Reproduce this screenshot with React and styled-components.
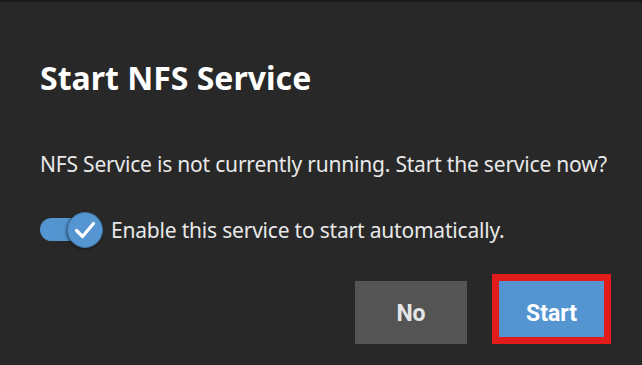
import React from "react";
import styled, { createGlobalStyle } from "styled-components";

const GlobalStyle = createGlobalStyle`
  html, body {
    margin: 0;
    padding: 0;
    background: #282828;
  }
  body {
    font-family: "Noto Sans", "Open Sans", sans-serif;
  }
`;

const Dialog = styled.div`
  box-sizing: border-box;
  width: 642px;
  height: 365px;
  background: #282828;
  border-top: 2px solid #1c1c1c;
  padding: 0 31px 0 40px;
  display: flex;
  flex-direction: column;
`;

const Title = styled.h1`
  margin: 56px 0 0 0;
  font-size: 32px;
  line-height: 40px;
  font-weight: 700;
  color: #ffffff;
  letter-spacing: 0;
`;

const Message = styled.p`
  margin: 52px 0 0 0;
  font-size: 21px;
  line-height: 28px;
  color: #e8e8e8;
  letter-spacing: -0.2px;
  white-space: nowrap;
`;

const ToggleRow = styled.label`
  display: flex;
  align-items: center;
  gap: 8px;
  margin-top: 34px;
  height: 36px;
  color: #e8e8e8;
  font-size: 21px;
  letter-spacing: -0.2px;
  white-space: nowrap;
`;

const Switch = styled.span`
  position: relative;
  width: 63px;
  height: 36px;
  flex: none;
`;

const Track = styled.span`
  position: absolute;
  left: 0;
  top: 6px;
  width: 44px;
  height: 23px;
  border-radius: 12px;
  background: #5495d1;
`;

const Knob = styled.span`
  position: absolute;
  right: 0;
  top: 0;
  box-sizing: border-box;
  width: 36px;
  height: 36px;
  border-radius: 50%;
  background: #5596d2;
  border: 1px solid #3d6f9c;
  box-shadow: -1px 1px 3px rgba(0, 0, 0, 0.45);
  display: flex;
  align-items: center;
  justify-content: center;
`;

const Actions = styled.div`
  display: flex;
  justify-content: flex-end;
  align-items: flex-end;
  gap: 25px;
  margin-top: 26px;
`;

const Button = styled.button`
  box-sizing: border-box;
  border: none;
  margin: 0;
  font-family: Roboto, "Noto Sans", sans-serif;
  font-weight: 700;
  font-size: 23px;
  color: ${({ primary }) => (primary ? "#ffffff" : "#e6e6e6")};
  background: ${({ primary }) => (primary ? "#5495d1" : "#545454")};
  width: ${({ primary }) => (primary ? "105px" : "112px")};
  height: ${({ primary }) => (primary ? "56px" : "63px")};
  padding: 0;
  padding-top: ${({ primary }) => (primary ? "8px" : "1px")};
`;

const Highlight = styled.div`
  border: 7px solid #e21b1b;
  display: flex;
`;

const Check = () => (
  <svg width="26" height="26" viewBox="0 0 26 26">
    <path
      d="M4.5 13.5 L10.5 19.5 L21.5 6.5"
      fill="none"
      stroke="#ffffff"
      strokeWidth="3.2"
      strokeLinecap="round"
      strokeLinejoin="round"
    />
  </svg>
);

export default function App() {
  return (
    <>
      <GlobalStyle />
      <Dialog>
        <Title>Start NFS Service</Title>
        <Message>
          NFS Service is not currently running. Start the service now?
        </Message>
        <ToggleRow>
          <Switch>
            <Track />
            <Knob>
              <Check />
            </Knob>
          </Switch>
          Enable this service to start automatically.
        </ToggleRow>
        <Actions>
          <Button>No</Button>
          <Highlight>
            <Button primary>Start</Button>
          </Highlight>
        </Actions>
      </Dialog>
    </>
  );
}
